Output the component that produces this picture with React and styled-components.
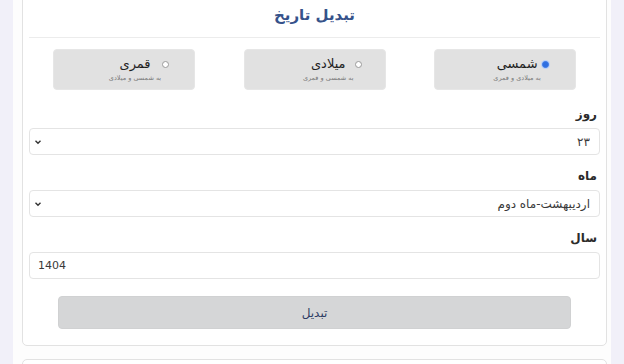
import React, { useState } from 'react';
import styled, { createGlobalStyle } from 'styled-components';

const GlobalStyle = createGlobalStyle`
  html, body {
    margin: 0;
    padding: 0;
    background: #f1f0f9;
    font-family: "DejaVu Sans", "Noto Sans", sans-serif;
    overflow: hidden;
  }
`;

const Page = styled.div`
  margin: 0 13px;
  padding: 0 4px 0 9px;
  background: #fdfdfd;
  height: 364px;
  overflow: hidden;
`;

const Card = styled.div`
  background: #fff;
  border: 1px solid #e2e2e2;
  border-radius: 5px;
  padding: 0 6px 16px;
  margin-top: -6px;
  direction: rtl;
`;

const Header = styled.div`
  padding: 10px 0 12px;
  border-bottom: 1px solid #ececec;
  text-align: center;
`;

const Title = styled.h2`
  margin: 0;
  font-size: 15px;
  line-height: 20px;
  font-weight: bold;
  color: #36528a;
`;

const Options = styled.div`
  display: grid;
  grid-template-columns: repeat(3, 1fr);
  justify-items: center;
  margin-top: 11px;
`;

const OptionBox = styled.label`
  width: 142px;
  height: 41px;
  box-sizing: border-box;
  background: #e1e1e1;
  border: 1px solid #e6e6e6;
  border-radius: 4px;
  display: flex;
  align-items: flex-start;
  padding: 5px ${(p) => p.$pad}px 0 0;
  gap: 1px;
  cursor: pointer;
`;

const Radio = styled.span`
  width: 7px;
  height: 7px;
  margin-top: 6px;
  border-radius: 50%;
  flex-shrink: 0;
  box-sizing: border-box;
  border: 1px solid ${(p) => (p.$on ? '#3b78e7' : '#9a9a9a')};
  background: ${(p) => (p.$on ? '#2f6fe0' : '#fff')};
  box-shadow: ${(p) => (p.$on ? '0 0 0 1px #b9d0f8' : 'none')};
`;

const OptionText = styled.div`
  display: flex;
  flex-direction: column;
  align-items: center;
`;

const OptionName = styled.span`
  font-size: 13px;
  line-height: 17px;
  color: #1f1f1f;
`;

const OptionHint = styled.span`
  margin-top: 2px;
  font-size: 6.5px;
  line-height: 9px;
  color: #7a7a7a;
  white-space: nowrap;
`;

const Field = styled.div`
  margin-top: ${(p) => p.$top}px;
`;

const Label = styled.div`
  font-size: 12px;
  line-height: 18px;
  font-weight: bold;
  color: #2b2b2b;
  margin-bottom: 5px;
  padding-right: 3px;
`;

const SelectWrap = styled.div`
  position: relative;
`;

const Select = styled.select`
  appearance: none;
  width: 100%;
  height: 27px;
  box-sizing: border-box;
  border: 1px solid #e4e4e4;
  border-radius: 4px;
  background: #fff;
  padding: 0 9px 0 20px;
  font-family: inherit;
  font-size: 12px;
  color: #3a3a3a;
  direction: rtl;
  outline: none;
`;

const Chevron = styled.svg`
  position: absolute;
  left: 5px;
  top: 10px;
  width: 8px;
  height: 8px;
  pointer-events: none;
`;

const Input = styled.input`
  width: 100%;
  height: 27px;
  box-sizing: border-box;
  border: 1px solid #e4e4e4;
  border-radius: 4px;
  background: #fff;
  padding: 0 8px;
  font-family: "DejaVu Sans", sans-serif;
  font-size: 11px;
  color: #3a3a3a;
  direction: ltr;
  outline: none;
`;

const Button = styled.button`
  display: block;
  width: 90%;
  height: 33px;
  margin: 17px auto 0;
  border: 1px solid #d0d1d2;
  border-radius: 4px;
  background: #d5d6d7;
  font-family: inherit;
  font-size: 12px;
  color: #2d3c63;
  cursor: pointer;
`;

const NextCard = styled.div`
  margin-top: 13px;
  height: 20px;
  background: #fff;
  border: 1px solid #e2e2e2;
  border-radius: 5px;
`;

const options = [
  { id: 'sh', name: 'شمسی', hint: 'به میلادی و قمری', pad: 26 },
  { id: 'mi', name: 'میلادی', hint: 'به شمسی و قمری', pad: 23 },
  { id: 'gh', name: 'قمری', hint: 'به شمسی و میلادی', pad: 25 },
];

const Arrow = () => (
  <Chevron viewBox="0 0 8 8">
    <path d="M1.5 2.8 L4 5.3 L6.5 2.8" fill="none" stroke="#333" strokeWidth="1.4" />
  </Chevron>
);

const App = () => {
  const [mode, setMode] = useState('sh');
  return (
    <>
      <GlobalStyle />
      <Page>
        <Card>
          <Header>
            <Title>تبدیل تاریخ</Title>
          </Header>
          <Options>
            {options.map((o) => (
              <OptionBox key={o.id} $pad={o.pad} onClick={() => setMode(o.id)}>
                <Radio $on={mode === o.id} />
                <OptionText>
                  <OptionName>{o.name}</OptionName>
                  <OptionHint>{o.hint}</OptionHint>
                </OptionText>
              </OptionBox>
            ))}
          </Options>
          <Field $top={15}>
            <Label>روز</Label>
            <SelectWrap>
              <Select defaultValue="23">
                <option value="23">۲۳</option>
              </Select>
              <Arrow />
            </SelectWrap>
          </Field>
          <Field $top={12}>
            <Label>ماه</Label>
            <SelectWrap>
              <Select defaultValue="2">
                <option value="2">اردیبهشت-ماه دوم</option>
              </Select>
              <Arrow />
            </SelectWrap>
          </Field>
          <Field $top={12}>
            <Label>سال</Label>
            <Input defaultValue="1404" />
          </Field>
          <Button>تبدیل</Button>
        </Card>
        <NextCard />
      </Page>
    </>
  );
};

export default App;
